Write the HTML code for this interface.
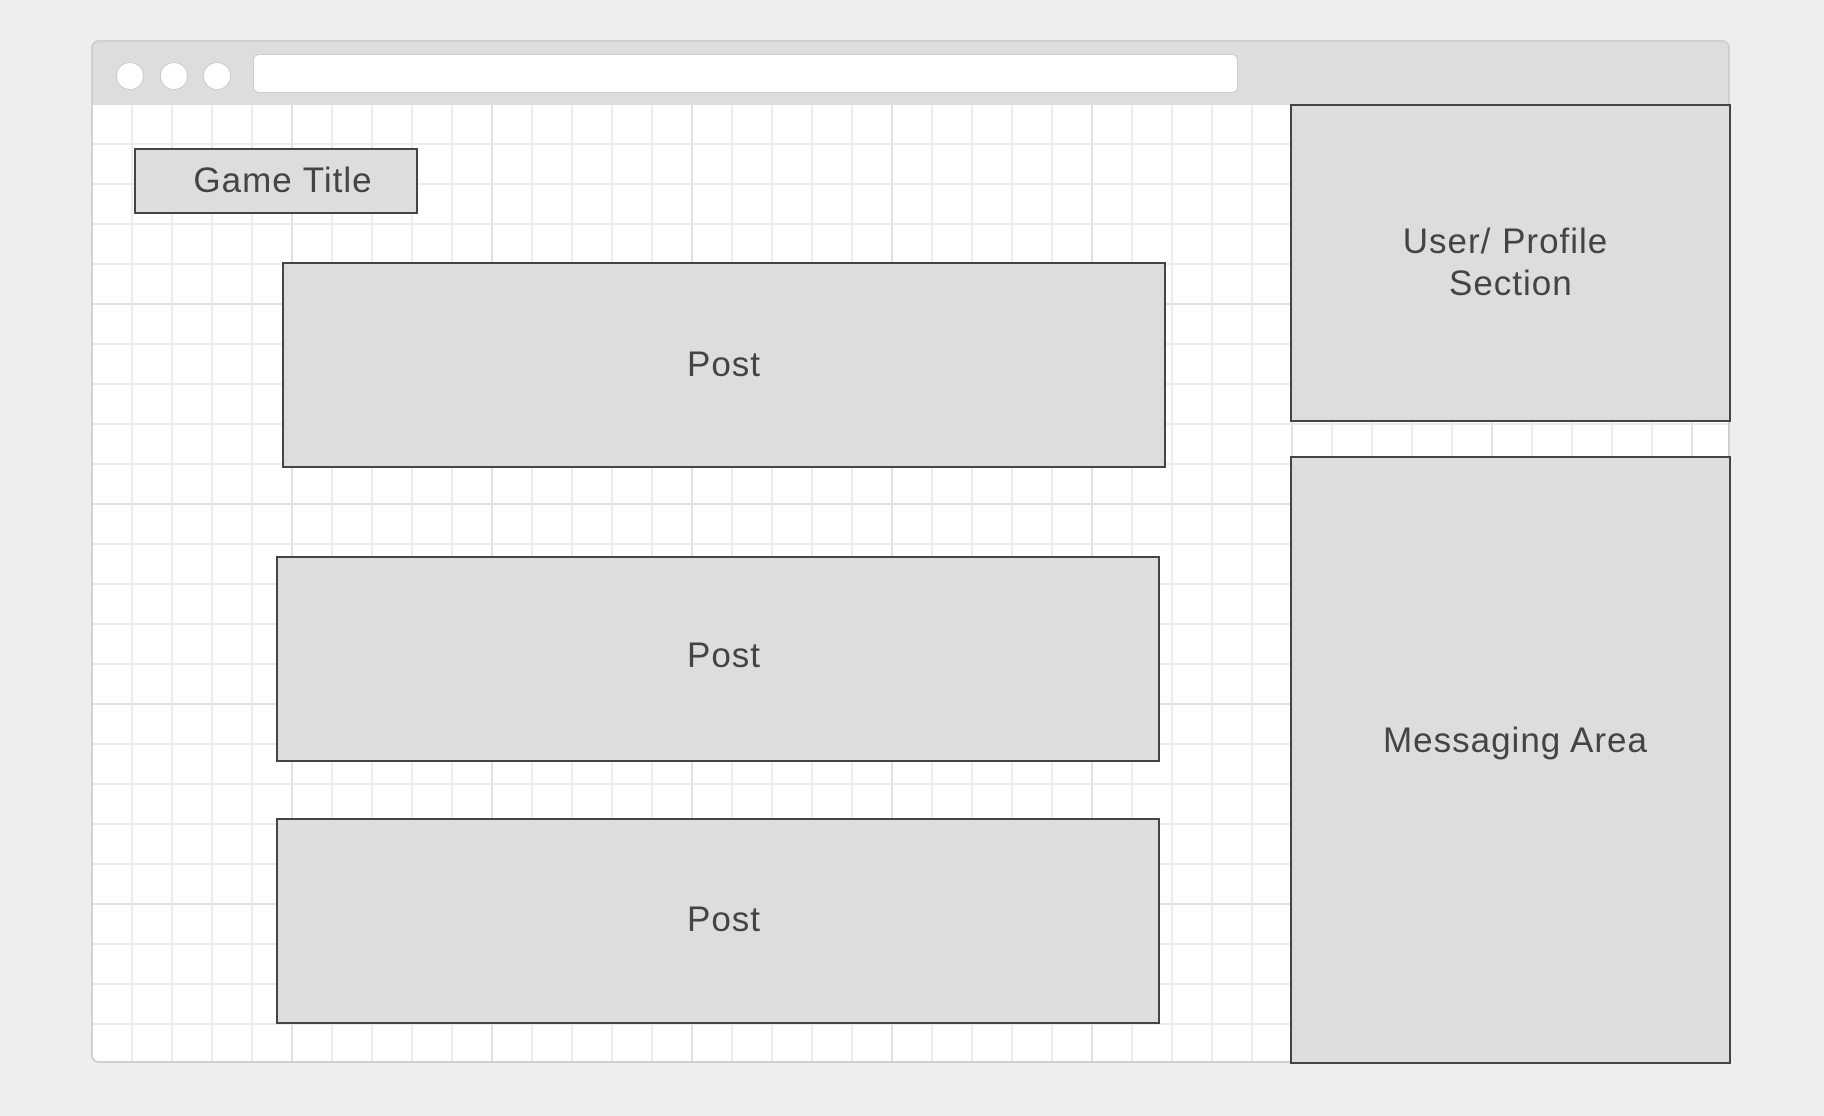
<!DOCTYPE html>
<html><head><style>
*{margin:0;padding:0;box-sizing:border-box}
body{width:1824px;height:1116px;background:#eeeeee;position:relative;overflow:hidden;font-family:"Liberation Sans",sans-serif;color:#444}
.win{position:absolute;left:91px;top:40px;width:1639px;height:1023px;border:2px solid #d0d0d0;border-radius:8px;background:#ddd;overflow:hidden}
.grid{position:absolute;left:0;top:63px;right:0;bottom:0;background-color:#fff;
background-image:linear-gradient(#e2e2e2 2px,transparent 2px),linear-gradient(90deg,#e2e2e2 2px,transparent 2px),linear-gradient(#ececec 2px,transparent 2px),linear-gradient(90deg,#ececec 2px,transparent 2px);
background-size:200px 200px,200px 200px,40px 40px,40px 40px;background-position:-2px -2px}
.dot{position:absolute;top:20px;width:28px;height:28px;border-radius:50%;background:#fff;border:1px solid #ccc}
.url{position:absolute;left:160px;top:12px;width:985px;height:39px;background:#fff;border:1px solid #ccc;border-radius:6px}
.box{position:absolute;background:#ddd;border:2px solid #444;display:flex;align-items:center;justify-content:center;text-align:center;font-size:35px;letter-spacing:1px}
</style></head><body>
<div class="win">
<div class="dot" style="left:23px"></div>
<div class="dot" style="left:67px"></div>
<div class="dot" style="left:110px"></div>
<div class="url"></div>
<div class="grid"></div>
</div>
<div class="box" style="left:134px;top:148px;width:284px;height:66px;padding-left:14px">Game Title</div>
<div class="box" style="left:282px;top:262px;width:884px;height:206px">Post</div>
<div class="box" style="left:276px;top:556px;width:884px;height:206px;padding-left:12px;padding-bottom:7px">Post</div>
<div class="box" style="left:276px;top:818px;width:884px;height:206px;padding-left:12px;padding-bottom:2px">Post</div>
<div class="box" style="left:1290px;top:104px;width:441px;height:318px;line-height:42px;padding-bottom:0px;padding-right:10px">User/ Profile<br>&nbsp;Section</div>
<div class="box" style="left:1290px;top:456px;width:441px;height:608px;padding-left:10px;padding-bottom:38px">Messaging Area</div>
</body></html>
